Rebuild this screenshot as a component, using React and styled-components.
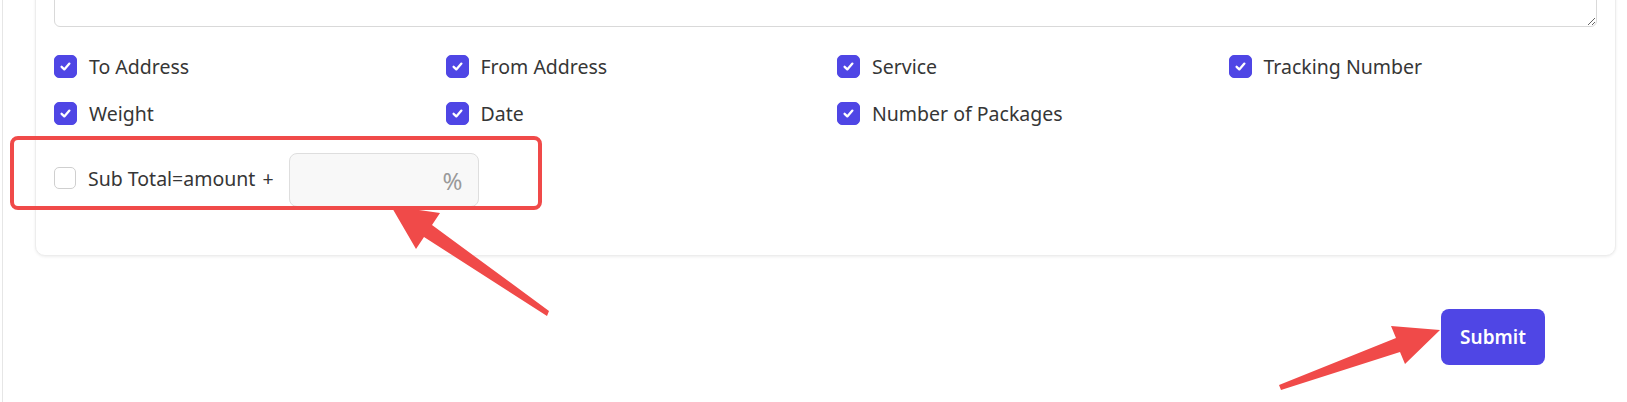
import React from 'react'
import styled, { createGlobalStyle } from 'styled-components'

const GlobalStyle = createGlobalStyle`
  html, body { margin: 0; padding: 0; background: #fff; overflow: hidden; }
  body { font-family: "Noto Sans", "Open Sans", Arial, sans-serif; color: #363636; }
`

const Shell = styled.div`
  position: relative;
  display: flow-root;
  box-sizing: border-box;
  margin-left: 2px;
  min-height: 402px;
  border-left: 1px solid #e6e6e6;
  padding: 0 11px 0 32px;
`

const Card = styled.section`
  margin-top: -92px;
  background: #fff;
  border: 1px solid #ededed;
  border-radius: 10px;
  box-shadow: 0 1px 3px rgba(0, 0, 0, 0.07);
  padding: 18px 18px 48px;
`

const Notes = styled.textarea`
  display: block;
  box-sizing: border-box;
  width: 100%;
  height: 100px;
  border: 1px solid #d9d9d9;
  border-radius: 6px;
  resize: vertical;
  font: inherit;
`

const Grid = styled.div`
  display: grid;
  grid-template-columns: repeat(4, 1fr);
  column-gap: 23px;
  row-gap: 24px;
  margin-top: 28px;
`

const Option = styled.label`
  display: flex;
  align-items: center;
  gap: 12px;
  font-size: 19.5px;
  line-height: 23px;
  color: #363636;
  white-space: nowrap;
  margin-bottom: ${p => (p.$raised ? '4px' : '0')};
`

const Plus = styled.span`
  margin-left: 7px;
`

const Box = styled.span`
  flex: none;
  display: inline-flex;
  align-items: center;
  justify-content: center;
  box-sizing: border-box;
  width: ${p => (p.$checked ? '23px' : '22px')};
  height: ${p => (p.$checked ? '23px' : '22px')};
  border-radius: 5px;
  background: ${p => (p.$checked ? '#4f46e5' : '#fff')};
  border: 1px solid ${p => (p.$checked ? '#4f46e5' : '#cfcfcf')};
`

const SubRow = styled.div`
  display: flex;
  align-items: center;
  margin-top: 28px;
`

const Percent = styled.div`
  display: flex;
  align-items: center;
  justify-content: flex-end;
  box-sizing: border-box;
  width: 190px;
  height: 54px;
  margin-left: 15px;
  padding-right: 15px;
  background: #f8f8f8;
  border: 1px solid #dedede;
  border-radius: 8px;
  color: #9a9a9a;
  font-size: 24px;
`

const Footer = styled.div`
  display: flex;
  justify-content: flex-end;
  padding: 53px 71px 0 0;
`

const SubmitButton = styled.button`
  width: 104px;
  height: 56px;
  border: none;
  border-radius: 8px;
  background: #4f46e5;
  color: #fff;
  font-family: "Noto Sans", "Open Sans", Arial, sans-serif;
  font-size: 19px;
  font-weight: 600;
`

const Highlight = styled.div`
  position: absolute;
  left: 7px;
  top: 136px;
  width: 532px;
  height: 74px;
  box-sizing: border-box;
  border: 4px solid #f04a49;
  border-radius: 8px;
  pointer-events: none;
`

const Overlay = styled.svg`
  position: absolute;
  left: -3px;
  top: 0;
  pointer-events: none;
`

function Check() {
  return (
    <svg width="13" height="13" viewBox="0 0 13 13">
      <polyline points="2.6,6.8 5.3,9.4 10.4,3.6" fill="none" stroke="#fff" strokeWidth="2.3" strokeLinecap="round" strokeLinejoin="round" />
    </svg>
  )
}

const fields = ['To Address', 'From Address', 'Service', 'Tracking Number', 'Weight', 'Date', 'Number of Packages']

export default function App() {
  return (
    <>
      <GlobalStyle />
      <Shell>
        <Card>
          <Notes />
          <Grid>
            {fields.map(f => (
              <Option key={f}>
                <Box $checked>
                  <Check />
                </Box>
                {f}
              </Option>
            ))}
          </Grid>
          <SubRow>
            <Option $raised>
              <Box />
              <span>
                Sub Total=amount<Plus>+</Plus>
              </span>
            </Option>
            <Percent>%</Percent>
          </SubRow>
        </Card>
        <Footer>
          <SubmitButton>Submit</SubmitButton>
        </Footer>
        <Highlight />
        <Overlay width="1627" height="402" viewBox="0 0 1627 402">
          <polygon
            fill="#f04a49"
            points="391,206 440,213 432,225 549,311 547,316 424,237 416,249"
          />
          <polygon
            fill="#f04a49"
            points="1440,330 1405,364 1400,352 1281,390 1279,385 1396,338 1391,326"
          />
        </Overlay>
      </Shell>
    </>
  )
}
